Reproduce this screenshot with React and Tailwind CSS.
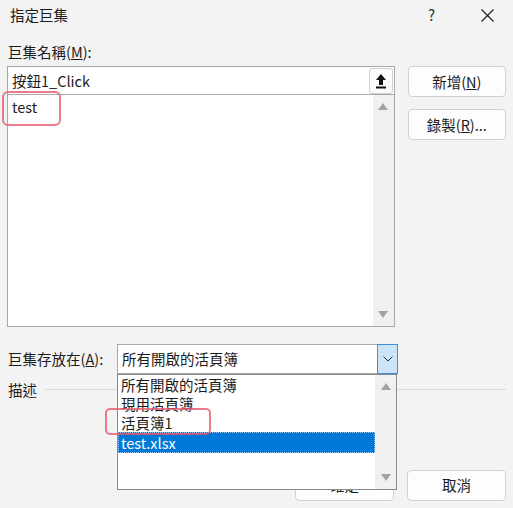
import React from 'react';

const font = { fontFamily: '"Noto Sans CJK TC", "Noto Sans", sans-serif' };

function UpArrow() {
  return (
    <svg width="10" height="7" viewBox="0 0 10 7"><path d="M5 0 L10 7 L0 7 Z" fill="#a3a3a3" /></svg>
  );
}

function DownArrow() {
  return (
    <svg width="10" height="7" viewBox="0 0 10 7"><path d="M0 0 L10 0 L5 7 Z" fill="#a3a3a3" /></svg>
  );
}

function Btn({ children, className = '' }) {
  return (
    <button className={"flex items-center justify-center rounded-[4px] border border-[#d1d1d1] bg-[#fdfdfd] text-[14.5px] text-[#1b1b1b] " + className}>
      {children}
    </button>
  );
}

export default function App() {
  return (
    <div className="relative w-[513px] h-[508px] overflow-hidden bg-[#f3f3f3] text-[#1b1b1b]" style={font}>
      {/* title bar */}
      <div className="flex h-[30px] items-center">
        <span className="ml-[10px] text-[14.5px]">指定巨集</span>
        <span className="ml-auto mr-[46px] text-[15px] text-[#333]">?</span>
        <svg className="mr-[19px]" width="13" height="13" viewBox="0 0 13 13">
          <path d="M0.5 0.5 L12.5 12.5 M12.5 0.5 L0.5 12.5" stroke="#222" strokeWidth="1.2" />
        </svg>
      </div>

      <div className="px-[7px]">
        <div className="mt-[9px] ml-[1px] h-[27px] text-[14.5px] leading-[25px]">
          巨集名稱(<u>M</u>):
        </div>

        <div className="flex">
          <div className="w-[390px]">
            <div className="flex h-[29px] items-center border border-[#a8a8a8] bg-white">
              <span className="ml-[4px] text-[14.5px]">按鈕1_Click</span>
              <div className="ml-auto mr-[1px] flex h-[26px] w-[24px] items-center justify-center rounded-[3px] border border-[#cfcfcf] bg-[#fbfbfb]">
                <svg width="12" height="16" viewBox="0 0 12 16">
                  <path d="M6 1 L11 7 L8 7 L8 12 L4 12 L4 7 L1 7 Z" fill="#111" />
                  <rect x="1" y="13.5" width="10" height="2" fill="#111" />
                </svg>
              </div>
            </div>
            <div className="flex h-[232px] border border-t-0 border-[#a8a8a8] bg-white">
              <div className="flex-1">
                <div className="relative ml-[4px] mt-[1px] text-[14.5px]">
                  test
                  <div className="absolute left-[-10px] top-[-5px] h-[35px] w-[59px] rounded-[6px] border-2 border-[#e7596d]/80"></div>
                </div>
              </div>
              <div className="flex w-[21px] flex-col items-center justify-between bg-[#f0f0f0] py-[8px]">
                <UpArrow />
                <DownArrow />
              </div>
            </div>
          </div>

          <div className="ml-[13px] flex w-[99px] flex-col gap-[12px]">
            <Btn className="h-[31px]">新增(<u>N</u>)</Btn>
            <Btn className="h-[31px]">錄製(<u>R</u>)...</Btn>
          </div>
        </div>

        <div className="mt-[17px] flex items-center">
          <span className="ml-[1px] w-[109px] text-[14.5px]">巨集存放在(<u>A</u>):</span>
          <div className="flex h-[30px] w-[281px] items-center border border-[#a8a8a8] bg-white">
            <span className="ml-[4px] text-[14.5px]">所有開啟的活頁簿</span>
            <div className="ml-auto flex h-[30px] w-[21px] -mr-[1px] items-center justify-center border border-[#3c8fdd] bg-[#cce4f7]">
              <svg width="10" height="6" viewBox="0 0 10 6"><path d="M0.5 0.5 L5 5 L9.5 0.5" stroke="#333" fill="none" strokeWidth="1" /></svg>
            </div>
          </div>
        </div>

        <div className="mt-[5px] flex items-center">
          <span className="ml-[1px] text-[14.5px]">描述</span>
          <div className="ml-[8px] h-px flex-1 bg-[#dadada]"></div>
        </div>

        <div className="mt-[69px] flex justify-end gap-[13px]">
          <Btn className="h-[31px] w-[99px] border-[#0067c0]">確定</Btn>
          <Btn className="h-[31px] w-[99px]">取消</Btn>
        </div>
      </div>

      {/* open dropdown list */}
      <div className="absolute left-[117px] top-[374px] flex h-[116px] w-[280px] border border-[#8a8a8a] bg-white">
        <div className="flex-1 text-[14.5px] leading-[19px]">
          <div className="pl-[3px]">所有開啟的活頁簿</div>
          <div className="pl-[3px]">現用活頁簿</div>
          <div className="relative pl-[3px]">
            活頁簿1
            <div className="absolute left-[-13px] top-[-5px] h-[27px] w-[106px] rounded-[5px] border-2 border-[#e7596d]/80"></div>
          </div>
          <div className="border border-dotted border-[#9cc8ee] bg-[#0078d7] pl-[2px] text-white">test.xlsx</div>
        </div>
        <div className="flex w-[21px] flex-col items-center justify-between bg-[#f0f0f0] py-[8px]">
          <UpArrow />
          <DownArrow />
        </div>
      </div>
    </div>
  );
}
